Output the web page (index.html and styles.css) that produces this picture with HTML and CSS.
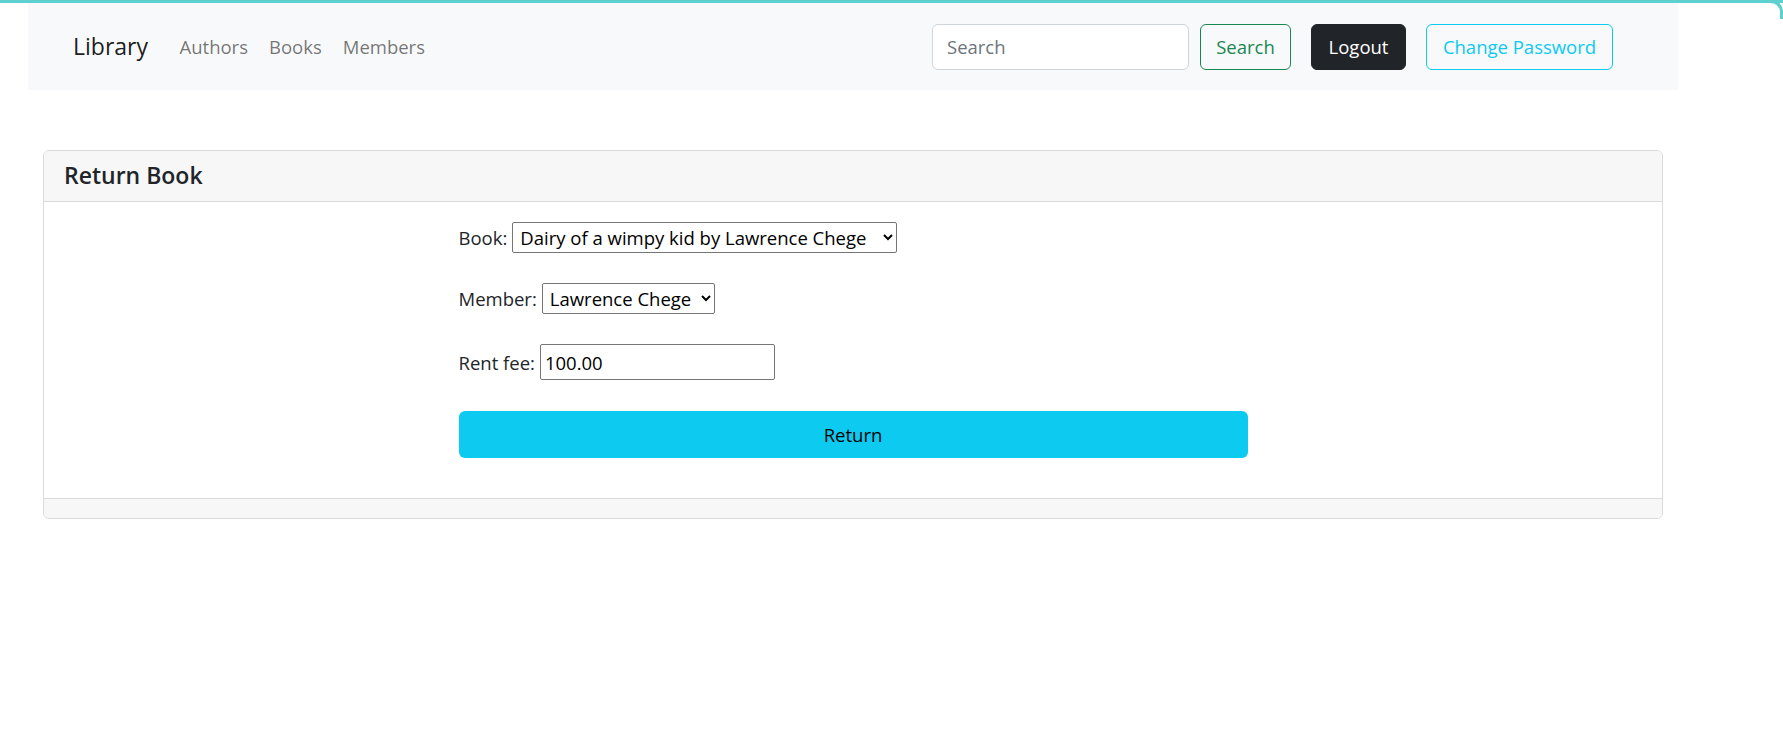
FILE: index.html
```html
<!DOCTYPE html>
<html lang="en">
<head>
<meta charset="utf-8">
<title>Library - Return Book</title>
<link rel="stylesheet" href="styles.css">
</head>
<body>
<div class="page">
  <div class="topline"></div>
  <nav class="navbar">
    <div class="nav-left">
      <a class="brand" href="#">Library</a>
      <ul class="nav-links">
        <li><a href="#">Authors</a></li>
        <li><a href="#">Books</a></li>
        <li><a href="#">Members</a></li>
      </ul>
    </div>
    <div class="nav-right">
      <form class="search-form">
        <input class="search-input" type="search" placeholder="Search">
        <button class="btn btn-outline-success" type="button">Search</button>
      </form>
      <button class="btn btn-dark" type="button">Logout</button>
      <button class="btn btn-outline-info" type="button">Change Password</button>
    </div>
  </nav>

  <main class="main">
    <section class="card">
      <header class="card-header"><h5 class="card-title">Return Book</h5></header>
      <div class="card-body">
        <form class="return-form">
          <div class="row row-select">
            <label for="book">Book:</label>
            <select id="book" class="sel sel-book"><option>Dairy of a wimpy kid by Lawrence Chege</option></select>
          </div>
          <div class="row row-select">
            <label for="member">Member:</label>
            <select id="member" class="sel sel-member"><option>Lawrence Chege</option></select>
          </div>
          <div class="row row-input">
            <label for="fee">Rent fee:</label>
            <input id="fee" class="fee-input" type="text" value="100.00">
          </div>
          <button class="btn-return" type="button">Return</button>
        </form>
      </div>
      <footer class="card-footer"></footer>
    </section>
  </main>
</div>
</body>
</html>
```

FILE: styles.css
```css
* { box-sizing: border-box; }

html, body {
  margin: 0;
  padding: 0;
  background: #ffffff;
}

body {
  font-family: "Open Sans", "Noto Sans", sans-serif;
  font-size: 18.5px;
  color: #212529;
}

.page {
  position: relative;
  width: 1783px;
  min-height: 754px;
}

.topline {
  height: 3px;
  background: #5fd0d0;
}

.page::after {
  content: "";
  position: absolute;
  top: 0;
  right: 0;
  width: 12px;
  height: 16px;
  border-top: 3px solid #5fd0d0;
  border-right: 3px solid #5fd0d0;
  border-top-right-radius: 12px;
}

/* ---------- navbar ---------- */
.navbar {
  margin-left: 28px;
  width: 1650px;
  height: 87px;
  background: #f8f9fa;
  display: flex;
  align-items: center;
  justify-content: space-between;
  padding: 0 65px 0 45px;
}

.nav-left {
  display: flex;
  align-items: center;
}

.brand {
  font-size: 23px;
  color: rgba(0, 0, 0, 0.9);
  text-decoration: none;
  margin-right: 21px;
  line-height: 1.5;
}

.nav-links {
  list-style: none;
  margin: 0;
  padding: 0;
  display: flex;
}

.nav-links a {
  display: block;
  padding: 8px 10.5px;
  color: rgba(0, 0, 0, 0.55);
  text-decoration: none;
  line-height: 1.5;
}

.nav-right {
  display: flex;
  align-items: center;
  gap: 20px;
}

.search-form {
  display: flex;
  align-items: center;
  gap: 11px;
}

.search-input {
  width: 257px;
  height: 46px;
  border: 1px solid #ced4da;
  border-radius: 6px;
  padding: 0 14px;
  font-family: inherit;
  font-size: 18.5px;
  color: #212529;
  background: #fff;
}

.search-input::placeholder { color: #6c757d; }

.btn {
  height: 46px;
  padding: 0 13px;
  border-radius: 6px;
  font-family: inherit;
  font-size: 18.5px;
  line-height: 1.5;
  background: transparent;
  border: 1px solid transparent;
  cursor: pointer;
}

.btn-outline-success {
  color: #198754;
  border-color: #198754;
  width: 91px;
}

.btn-dark {
  color: #fff;
  background: #212529;
  border-color: #212529;
  width: 95px;
}

.btn-outline-info {
  color: #0dcaf0;
  border-color: #0dcaf0;
  width: 187px;
}

/* ---------- card ---------- */
.main {
  padding: 60px 0 0 43px;
}

.card {
  width: 1620px;
  border: 1px solid #dadada;
  border-radius: 6px;
  overflow: hidden;
  background: #fff;
}

.card-header {
  height: 51px;
  background: #f7f7f7;
  border-bottom: 1px solid #dadada;
  padding: 0 20px;
  display: flex;
  align-items: center;
}

.card-title {
  margin: 0;
  font-size: 23px;
  font-weight: 600;
  color: #212529;
  line-height: 1.2;
}

.card-body {
  padding: 20px 0 40px;
}

.return-form {
  width: 789px;
  margin: 0 auto;
  display: flex;
  flex-direction: column;
  gap: 30px;
}

.row {
  display: flex;
  align-items: center;
  gap: 5px;
}

.row-select { height: 31px; }
.row-input { height: 36px; }

.row label {
  font-size: 18.5px;
  color: #212529;
}

.sel {
  height: 31px;
  font-family: inherit;
  font-size: 18.5px;
  color: #000;
  background: #fff;
  border: 1px solid #767676;
  border-radius: 2px;
  padding: 0 2px 0 3px;
}

.sel-book { width: 385px; }
.sel-member { width: 173px; }

.fee-input {
  width: 235px;
  height: 36px;
  font-family: inherit;
  font-size: 18.5px;
  color: #000;
  border: 1px solid #767676;
  border-radius: 2px;
  padding: 0 4px;
}

.btn-return {
  margin-top: 1px;
  width: 789px;
  height: 47px;
  border: none;
  border-radius: 6px;
  background: #0dcaf0;
  color: #000;
  font-family: inherit;
  font-size: 18.5px;
  cursor: pointer;
}

.card-footer {
  height: 20px;
  background: #f7f7f7;
  border-top: 1px solid #dadada;
}
```
